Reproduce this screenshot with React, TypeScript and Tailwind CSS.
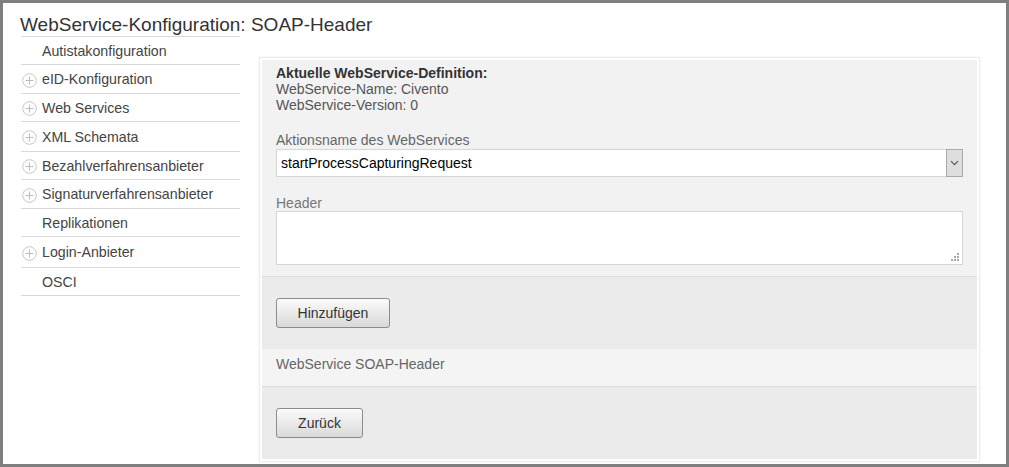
import React from 'react';

const menu = [
  { label: 'Autistakonfiguration', plus: false, h: 'h-[27px]' },
  { label: 'eID-Konfiguration', plus: true, h: 'h-[28px]' },
  { label: 'Web Services', plus: true, h: 'h-[27px]' },
  { label: 'XML Schemata', plus: true, h: 'h-[29px]' },
  { label: 'Bezahlverfahrensanbieter', plus: true, h: 'h-[27px]' },
  { label: 'Signaturverfahrensanbieter', plus: true, h: 'h-[28px]' },
  { label: 'Replikationen', plus: false, h: 'h-[27px]' },
  { label: 'Login-Anbieter', plus: true, h: 'h-[30px]' },
  { label: 'OSCI', plus: false, h: 'h-[27px]' },
];

function PlusCircle() {
  return (
    <svg width="15" height="15" viewBox="0 0 15 15" className="shrink-0 -ml-[1px] mt-[2px]">
      <circle cx="7.5" cy="7.5" r="6.8" fill="none" stroke="#c8c8c8" strokeWidth="1" />
      <path d="M7.5 3.5v8M3.5 7.5h8" stroke="#bdbdbd" strokeWidth="1" />
    </svg>
  );
}

function Button({ children, w }: { children: React.ReactNode; w: string }) {
  return (
    <button
      className={`${w} h-[30px] rounded-[3px] border border-[#8c8c8c] bg-gradient-to-b from-[#fbfbfb] to-[#d9d9d9] text-[14px] text-[#333]`}
    >
      {children}
    </button>
  );
}

export default function App() {
  return (
    <div className="w-[1009px] h-[467px] border-[3px] border-[#7f7f7f] bg-white font-['Liberation_Sans',Arial,sans-serif] overflow-hidden">
      <div className="pl-[17px] pt-[10px]">
        <h1 className="h-[23px] leading-[23px] text-[19px] text-[#333] whitespace-nowrap">
          WebService-Konfiguration: SOAP-Header
        </h1>
        <div className="flex items-start">
          <nav className="ml-[1px] w-[219px] border-t border-[#d9d9d9]">
            {menu.map((m) => (
              <div
                key={m.label}
                className={`${m.h} box-content flex items-center pl-[2px] gap-[5px] border-b border-[#d9d9d9] text-[14.2px] text-[#444]`}
              >
                {m.plus ? <PlusCircle /> : <span className="w-[14px] shrink-0" />}
                <span className="mt-[2px]">{m.label}</span>
              </div>
            ))}
          </nav>

          <div className="ml-[19px] mt-[21px] w-[721px] border border-[#ececec] bg-white p-[2px] shadow-[0_0_3px_rgba(0,0,0,0.06)]">
            <div className="bg-[#f2f2f2] px-[14px] pt-[5px] pb-[11px] border-b border-[#dcdcdc] text-[14px] leading-[16px] text-[#555]">
              <div className="font-bold text-[#333]">Aktuelle WebService-Definition:</div>
              <div>WebService-Name: Civento</div>
              <div>WebService-Version: 0</div>
              <div className="mt-[19px] text-[#666]">Aktionsname des WebServices</div>
              <div className="mt-[1px] h-[28px] flex items-stretch border border-[#d6d6d6] bg-white">
                <div className="flex-1 flex items-center pl-[4px] text-[14px] text-black">
                  startProcessCapturingRequest
                </div>
                <div className="w-[17px] flex items-center justify-center bg-[#dedede] border border-[#a9a9a9] m-[-1px]">
                  <svg width="9" height="6" viewBox="0 0 9 6">
                    <path d="M1 1.2l3.5 3.5L8 1.2" fill="none" stroke="#555" strokeWidth="1.2" />
                  </svg>
                </div>
              </div>
              <div className="mt-[18px] text-[#777]">Header</div>
              <div className="relative h-[54px] border border-[#d6d6d6] bg-white">
                <svg width="9" height="9" viewBox="0 0 9 9" className="absolute right-[3px] bottom-[3px]">
                  <rect x="7" y="1" width="2" height="2" fill="#aaa" />
                  <rect x="4" y="4" width="2" height="2" fill="#aaa" />
                  <rect x="7" y="4" width="2" height="2" fill="#aaa" />
                  <rect x="1" y="7" width="2" height="2" fill="#aaa" />
                  <rect x="4" y="7" width="2" height="2" fill="#aaa" />
                  <rect x="7" y="7" width="2" height="2" fill="#aaa" />
                </svg>
              </div>
            </div>

            <div className="bg-[#ebebeb] px-[14px] py-[21px]">
              <Button w="w-[114px]">Hinzufügen</Button>
            </div>

            <div className="h-[38px] bg-[#f4f4f4] px-[14px] pt-[7px] border-b border-[#dcdcdc] text-[14px] leading-[16px] text-[#666]">
              WebService SOAP-Header
            </div>

            <div className="bg-[#ebebeb] px-[14px] py-[21px]">
              <Button w="w-[87px]">Zurück</Button>
            </div>
          </div>
        </div>
      </div>
    </div>
  );
}
